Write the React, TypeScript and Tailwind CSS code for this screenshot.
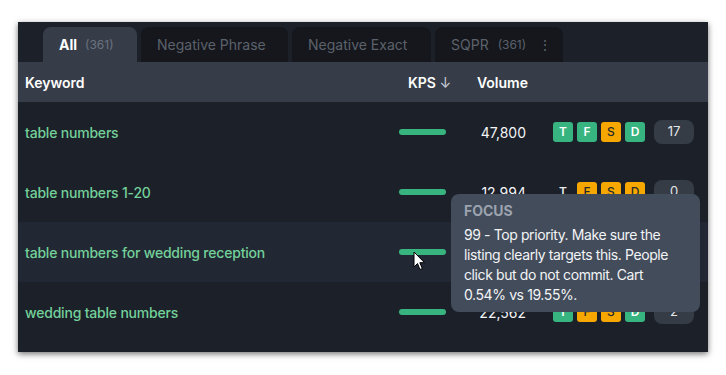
import React from "react";

type Badge = { l: string; c: "g" | "o" | "n" };
type Row = { kw: string; vol: string; badges: Badge[]; count: string; hover?: boolean };

const rows: Row[] = [
  { kw: "table numbers", vol: "47,800", badges: [{ l: "T", c: "g" }, { l: "F", c: "g" }, { l: "S", c: "o" }, { l: "D", c: "g" }], count: "17" },
  { kw: "table numbers 1-20", vol: "12,994", badges: [{ l: "T", c: "n" }, { l: "F", c: "o" }, { l: "S", c: "o" }, { l: "D", c: "o" }], count: "0" },
  { kw: "table numbers for wedding reception", vol: "", badges: [], count: "", hover: true },
  { kw: "wedding table numbers", vol: "22,562", badges: [{ l: "T", c: "g" }, { l: "F", c: "o" }, { l: "S", c: "o" }, { l: "D", c: "g" }], count: "2" },
];

function BadgeBox({ b }: { b: Badge }) {
  if (b.c === "n")
    return <div className="w-5 h-5 flex items-center justify-center text-[12px] font-semibold text-[#e5e7eb]">{b.l}</div>;
  if (b.c === "g")
    return <div className="w-5 h-5 rounded-[3px] bg-[#37b47f] flex items-center justify-center text-[12px] font-semibold text-white">{b.l}</div>;
  return <div className="w-5 h-5 rounded-[3px] bg-[#f7a800] flex items-center justify-center text-[12px] font-medium text-[#2a2a2a]">{b.l}</div>;
}

export default function App() {
  return (
    <div className="w-[726px] h-[375px] bg-white relative" style={{ fontFamily: "Inter, 'Noto Sans', sans-serif" }}>
      <div className="absolute left-[18px] top-[22px] w-[690px] h-[330px] bg-[#1b2029] shadow-[0_2px_6px_rgba(0,0,0,0.55)] flex flex-col">
        {/* Tabs */}
        <div className="h-10 flex items-end pl-[25px] gap-1">
          <div className="h-[35px] w-[94px] rounded-t-lg bg-[#363d48] flex items-center pl-4 gap-2">
            <span className="text-[14px] font-bold text-white">All</span>
            <span className="text-[12px] text-[#6b7280]">(361)</span>
          </div>
          <div className="h-[35px] w-[147px] rounded-t-lg bg-[#15171c] flex items-center pl-4">
            <span className="text-[14px] text-[#5c626c]">Negative Phrase</span>
          </div>
          <div className="h-[35px] w-[139px] rounded-t-lg bg-[#15171c] flex items-center pl-4">
            <span className="text-[14px] text-[#5c626c]">Negative Exact</span>
          </div>
          <div className="h-[35px] w-[128px] rounded-t-lg bg-[#15171c] flex items-center pl-4">
            <span className="text-[14px] text-[#5c626c]">SQPR</span>
            <span className="text-[12px] text-[#5c626c] ml-[9px]">(361)</span>
            <span className="text-[14px] text-[#5c626c] ml-[12px]">⋮</span>
          </div>
        </div>
        {/* Header */}
        <div className="h-10 bg-[#363d48] grid grid-cols-[374px_71px_58px_1fr] items-center pl-[7px]">
          <span className="text-[14px] font-semibold text-white">Keyword</span>
          <span className="text-[14px] font-semibold text-white pl-[9px]">KPS <span className="text-[#c9ced6] font-normal">↓</span></span>
          <span className="text-[14px] font-semibold text-white text-right">Volume</span>
          <span />
        </div>
        {/* Rows */}
        {rows.map((r, i) => (
          <div key={i} className={`h-[60px] grid grid-cols-[374px_71px_58px_1fr] items-center pl-[7px] ${r.hover ? "bg-[#212833]" : ""}`}>
            <span className="text-[14px] font-medium tracking-[-0.2px] text-[#74d09a]">{r.kw}</span>
            <div className="h-[6px] w-[47px] rounded-full bg-[#38b57e]" />
            <span className="text-[14px] text-[#f3f4f6] text-right pr-[2px]">{r.vol}</span>
            {r.count ? (
              <div className="flex items-center pl-[25px]">
                <div className="flex gap-1">
                  {r.badges.map((b, j) => <BadgeBox key={j} b={b} />)}
                </div>
                <div className="ml-[9px] w-10 h-6 rounded-lg bg-[#363c46] flex items-center justify-center text-[13px] text-[#e5e7eb]">{r.count}</div>
              </div>
            ) : (
              <div />
            )}
          </div>
        ))}
      </div>

      {/* Tooltip */}
      <div className="absolute left-[451px] top-[194px] w-[249px] h-[118px] rounded-lg bg-[#424c5b] pl-[13px] pt-[7px]">
        <div className="text-[14px] leading-5 font-bold text-[#9ca3ae]">FOCUS</div>
        <div className="mt-[4px] text-[14px] leading-5 tracking-[-0.4px] text-[#f3f4f6] whitespace-nowrap">
          <div>99 - Top priority. Make sure the</div>
          <div>listing clearly targets this. People</div>
          <div>click but do not commit. Cart</div>
          <div>0.54% vs 19.55%.</div>
        </div>
      </div>

      {/* Cursor */}
      <svg className="absolute left-[413px] top-[251px]" width="13" height="20" viewBox="0 0 13 20">
        <path d="M1 1 L1 16 L4.5 12.5 L7 18.5 L9.3 17.5 L6.8 11.7 L11.5 11.7 Z" fill="white" stroke="black" strokeWidth="1" strokeLinejoin="round" />
      </svg>
    </div>
  );
}
